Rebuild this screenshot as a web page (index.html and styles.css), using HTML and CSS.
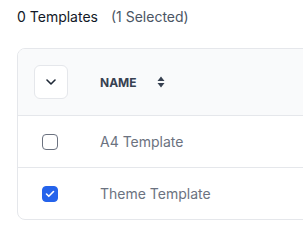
FILE: index.html
```html
<!DOCTYPE html>
<html lang="en">
<head>
	<meta charset="UTF-8">
	<meta name="viewport" content="width=device-width, initial-scale=1.0">
	<title>Templates</title>
	<link rel="stylesheet" href="styles.css">
</head>
<body>
	<div class="page">
		<div class="title">
			<span class="count">0 Templates</span>
			<span class="selected">(1 Selected)</span>
		</div>

		<div class="card">
			<div class="row head">
				<div class="cell select">
					<button class="toggle" aria-label="Toggle">
						<svg width="10" height="6" viewBox="0 0 10 6"><path d="M1 1l4 4 4-4" fill="none" stroke="#1f2937" stroke-width="1.6" stroke-linecap="round" stroke-linejoin="round"/></svg>
					</button>
				</div>
				<div class="cell name">
					<span>NAME</span>
					<svg class="sort" width="8" height="12" viewBox="0 0 8 12"><path d="M4 0.5L7.5 5H0.5z M4 11.5L0.5 7H7.5z" fill="#374151"/></svg>
				</div>
			</div>
			<div class="row">
				<div class="cell select"><span class="check"></span></div>
				<div class="cell name">A4 Template</div>
			</div>
			<div class="row">
				<div class="cell select">
					<span class="check on">
						<svg width="10" height="8" viewBox="0 0 10 8"><path d="M1.5 4l2.3 2.3L8.5 1.5" fill="none" stroke="#fff" stroke-width="1.6" stroke-linecap="round" stroke-linejoin="round"/></svg>
					</span>
				</div>
				<div class="cell name">Theme Template</div>
			</div>
		</div>
	</div>
</body>
</html>
```

FILE: styles.css
```css
:root {
	--border: #e5e7eb;
	--muted: #6b7280;
}

* { box-sizing: border-box; padding: 0; margin: 0; }

body {
	font-family: Inter, "Noto Sans", sans-serif;
	background: #fff;
	overflow: hidden;
}

.page {
	padding: 7px 0 0 17px;
	overflow: hidden;
}

.title {
	display: flex;
	gap: 13px;
	font-size: 14px;
	line-height: 20px;
	margin-bottom: 21px;
}
.count { color: #111827; }
.selected { color: #4b5563; }

.card {
	width: 320px;
	border: 1px solid var(--border);
	border-radius: 8px;
	overflow: hidden;
}

.row {
	display: flex;
	align-items: center;
	height: 52px;
	border-top: 1px solid var(--border);
}
.row.head {
	height: 66px;
	border-top: none;
	background: #f9fafb;
}

.cell.select {
	width: 66px;
	display: flex;
	justify-content: center;
	padding-right: 2px;
}
.cell.name {
	padding-left: 16px;
	font-size: 14px;
	color: var(--muted);
	display: flex;
	align-items: center;
}
.head .cell.name {
	font-size: 12px;
	font-weight: 700;
	color: #374151;
	gap: 20px;
}

.toggle {
	width: 34px;
	height: 34px;
	margin-left: 2px;
	background: #fff;
	border: 1px solid var(--border);
	border-radius: 6px;
	display: flex;
	align-items: center;
	justify-content: center;
}

.check {
	width: 16px;
	height: 16px;
	border: 1.5px solid var(--muted);
	border-radius: 4px;
	display: flex;
	align-items: center;
	justify-content: center;
}
.check.on {
	background: #2563eb;
	border-color: #2563eb;
}
```
